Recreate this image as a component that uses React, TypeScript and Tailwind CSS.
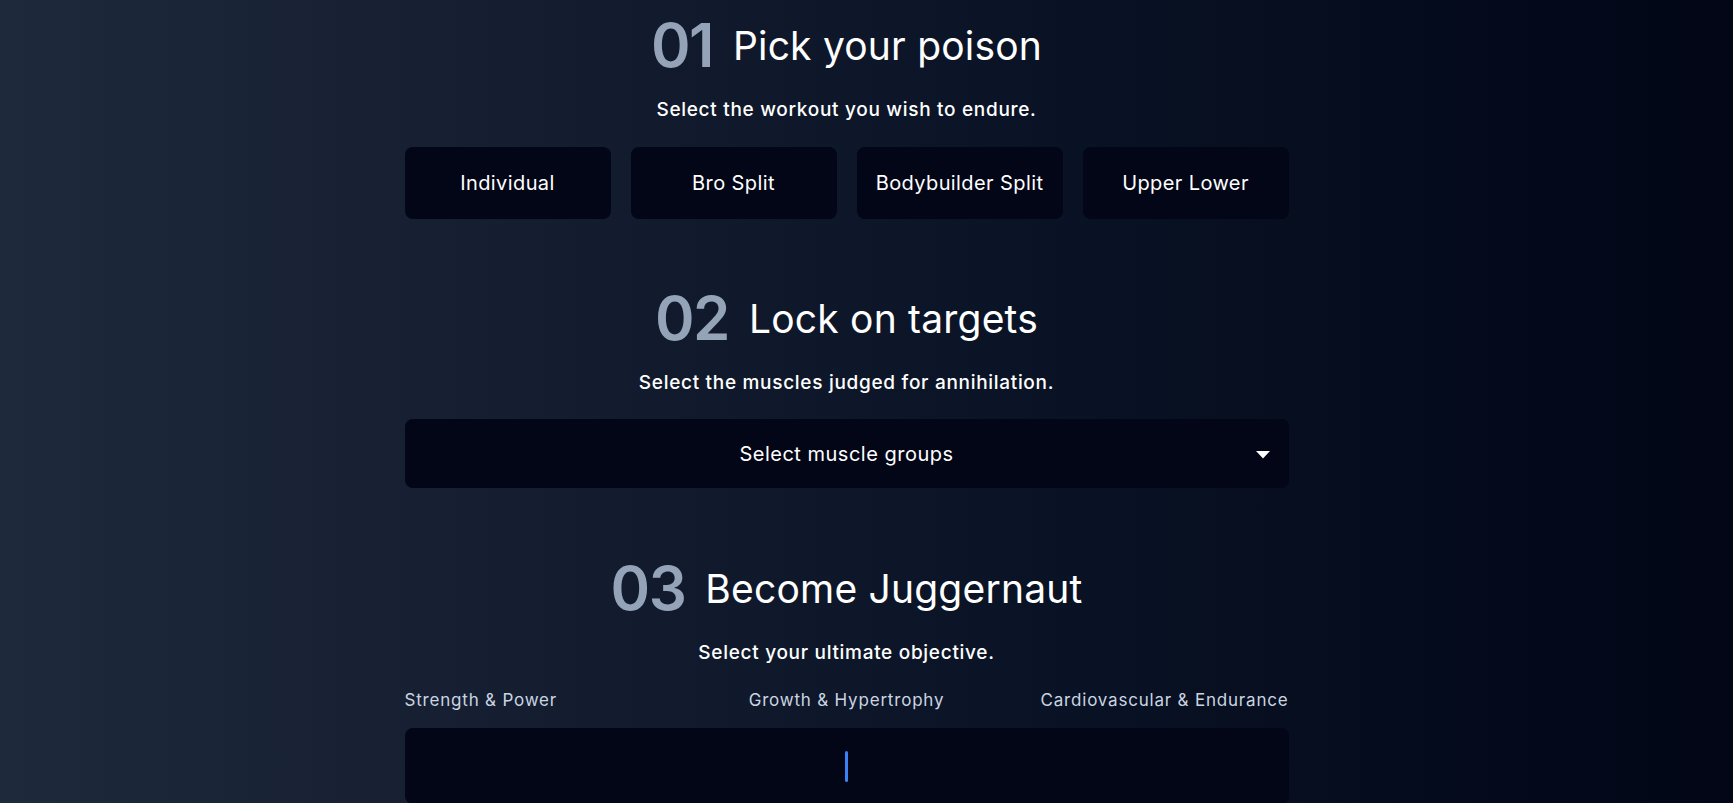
import React from "react";

function Heading({ num, title }: { num: string; title: string }) {
  return (
    <div className="flex h-[60px] items-center justify-center gap-[20px]">
      <span className="text-[60px] font-semibold leading-none tracking-tight text-[#94a3b8]">{num}</span>
      <span className="text-[39px] font-normal leading-none tracking-[0.2px] text-white">{title}</span>
    </div>
  );
}

function Sub({ children }: { children: React.ReactNode }) {
  return (
    <p className="mt-[21px] h-[28px] text-center text-[19px] font-medium leading-[28px] tracking-[0.7px] text-white">
      {children}
    </p>
  );
}

export default function App() {
  const splits = ["Individual", "Bro Split", "Bodybuilder Split", "Upper Lower"];
  return (
    <div
      className="min-h-screen w-full bg-gradient-to-r from-[#1e293b] to-[#020617] pr-[40px]"
      style={{ fontFamily: "Inter, 'Noto Sans', sans-serif" }}
    >
      <div className="mx-auto flex w-[884px] flex-col pb-16 pt-[15px]">
        <Heading num="01" title="Pick your poison" />
        <Sub>Select the workout you wish to endure.</Sub>
        <div className="mt-[23px] grid grid-cols-4 gap-5">
          {splits.map((s) => (
            <button
              key={s}
              className="flex h-[72px] items-center justify-center rounded-lg bg-[#020617] text-[20px] font-normal tracking-[0.4px] text-white"
            >
              {s}
            </button>
          ))}
        </div>

        <div className="mt-[69px]">
          <Heading num="02" title="Lock on targets" />
        </div>
        <Sub>Select the muscles judged for annihilation.</Sub>
        <div className="relative mt-[22px] flex h-[69px] items-center justify-center rounded-lg bg-[#020617]">
          <span className="text-[20px] font-normal tracking-[0.5px] text-white">Select muscle groups</span>
          <svg className="absolute right-[19px] top-[32px]" width="14" height="8" viewBox="0 0 14 8">
            <polygon points="0,0 14,0 7,7.5" fill="#ffffff" />
          </svg>
        </div>

        <div className="mt-[70px]">
          <Heading num="03" title="Become Juggernaut" />
        </div>
        <Sub>Select your ultimate objective.</Sub>
        <div className="mt-[21px] grid grid-cols-3 text-[17px] leading-6 tracking-[0.8px] text-[#cbd5e1]">
          <span className="whitespace-nowrap text-left">Strength &amp; Power</span>
          <span className="whitespace-nowrap text-center">Growth &amp; Hypertrophy</span>
          <span className="whitespace-nowrap text-right">Cardiovascular &amp; Endurance</span>
        </div>
        <div className="mt-4 flex h-[76px] items-center justify-center rounded-lg bg-[#020617]">
          <div className="h-[31px] w-[3px] rounded-full bg-[#3b82f6]" />
        </div>
      </div>
    </div>
  );
}
